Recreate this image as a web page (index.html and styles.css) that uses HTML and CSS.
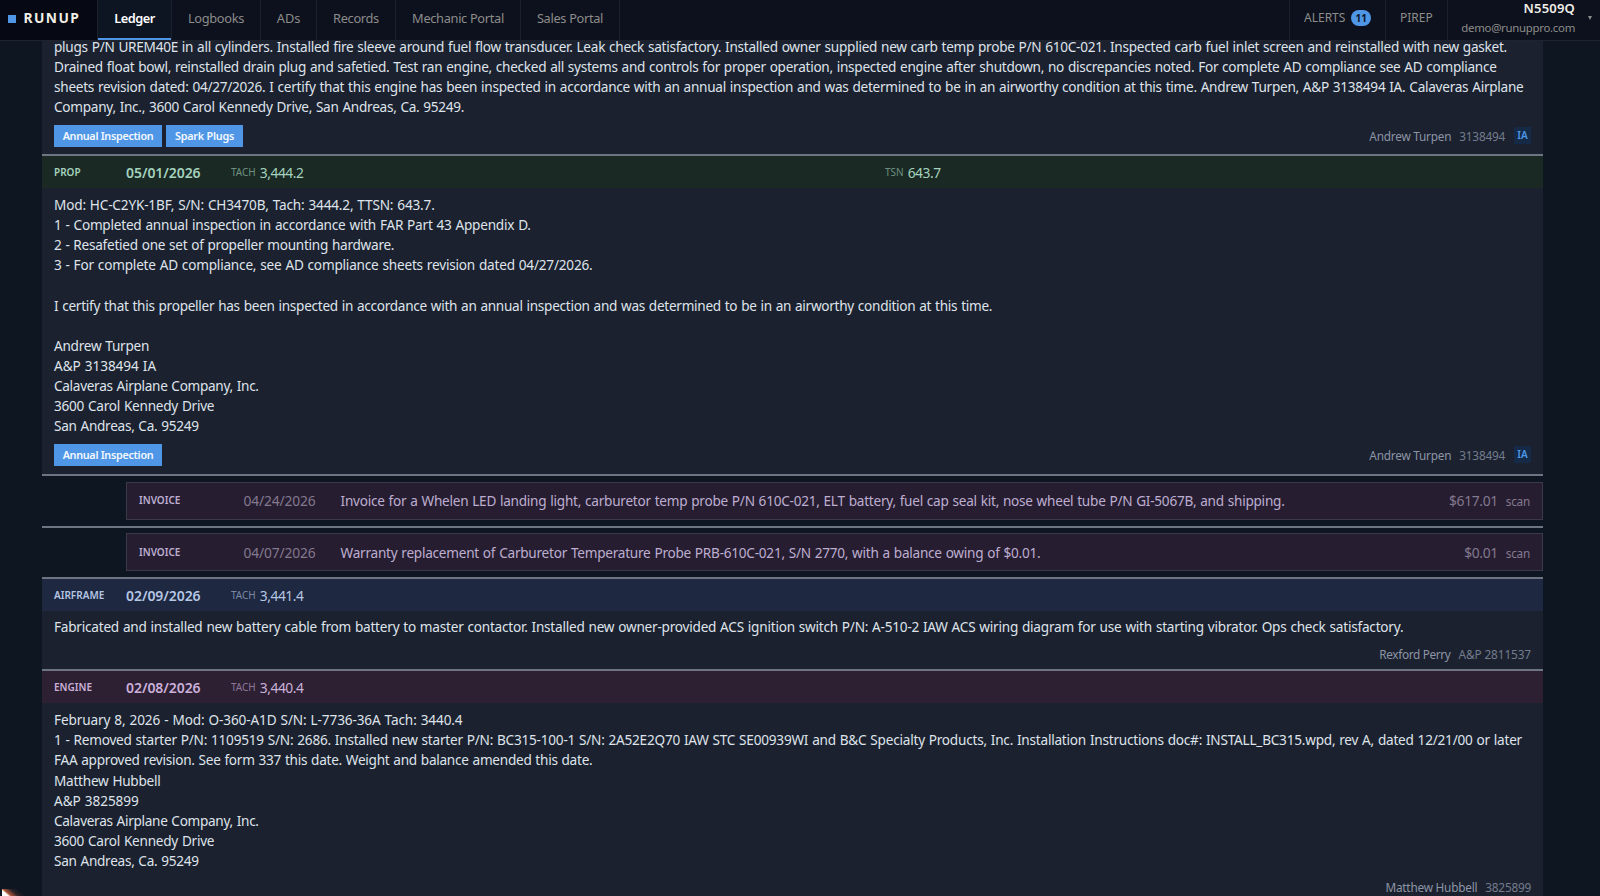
FILE: index.html
```html
<!DOCTYPE html>
<html lang="en">
<head>
<meta charset="utf-8">
<title>RunUp – Ledger</title>
<link rel="stylesheet" href="styles.css">
</head>
<body>
<nav class="nav">
  <div class="brand"><i class="mark"></i><span class="name">RUNUP</span></div>
  <a class="tab active"><span>Ledger</span></a>
  <a class="tab logbooks"><span>Logbooks</span></a>
  <a class="tab ads"><span>ADs</span></a>
  <a class="tab records"><span>Records</span></a>
  <a class="tab mechanic"><span>Mechanic Portal</span></a>
  <a class="tab sales"><span>Sales Portal</span></a>
  <div class="tools">
    <a class="tool alerts"><span>ALERTS</span><b class="count">11</b></a>
    <a class="tool pirep"><span>PIREP</span></a>
    <div class="account">
      <div class="who"><span class="tail">N5509Q</span><span class="mail">demo@runuppro.com</span></div>
      <span class="caret"></span>
    </div>
  </div>
</nav>
<main class="ledger">
  <article class="entry first">
    <div class="text"><p>plugs P/N UREM40E in all cylinders. Installed fire sleeve around fuel flow transducer. Leak check satisfactory. Installed owner supplied new carb temp probe P/N 610C-021. Inspected carb fuel inlet screen and reinstalled with new gasket.</p><p class="ls-27">Drained float bowl, reinstalled drain plug and safetied. Test ran engine, checked all systems and controls for proper operation, inspected engine after shutdown, no discrepancies noted. For complete AD compliance see AD compliance</p><p>sheets revision dated: 04/27/2026. I certify that this engine has been inspected in accordance with an annual inspection and was determined to be in an airworthy condition at this time. Andrew Turpen, A&amp;P 3138494 IA. Calaveras Airplane</p><p class="ls-27">Company, Inc., 3600 Carol Kennedy Drive, San Andreas, Ca. 95249.</p></div>
    <footer class="foot"><b class="tag annual">Annual Inspection</b><b class="tag plugs">Spark Plugs</b><div class="sign"><span>Andrew Turpen</span><span class="cert">3138494</span><b class="ia">IA</b></div></footer>
  </article>
  <article class="entry prop">
    <header class="head"><b class="kind">PROP</b><b class="date">05/01/2026</b><span class="meter"><small>TACH</small><span>3,444.2</span></span><span class="meter tsn"><small>TSN</small><span>643.7</span></span></header>
    <div class="text"><p class="ls-17">Mod: HC-C2YK-1BF, S/N: CH3470B, Tach: 3444.2, TTSN: 643.7.</p><p class="ls-22">1 - Completed annual inspection in accordance with FAR Part 43 Appendix D.</p><p>2 - Resafetied one set of propeller mounting hardware.</p><p class="ls-20">3 - For complete AD compliance, see AD compliance sheets revision dated 04/27/2026.</p><p></p><p class="ls-28">I certify that this propeller has been inspected in accordance with an annual inspection and was determined to be in an airworthy condition at this time.</p><p></p><p class="ls-25">Andrew Turpen</p><p class="ls-06">A&amp;P 3138494 IA</p><p class="ls-30">Calaveras Airplane Company, Inc.</p><p class="ls-25">3600 Carol Kennedy Drive</p><p class="ls-28">San Andreas, Ca. 95249</p></div>
    <footer class="foot"><b class="tag annual">Annual Inspection</b><div class="sign"><span>Andrew Turpen</span><span class="cert">3138494</span><b class="ia">IA</b></div></footer>
  </article>
  <article class="bill"><div class="box"><b class="kind">INVOICE</b><span class="when">04/24/2026</span><span class="what">Invoice for a Whelen LED landing light, carburetor temp probe P/N 610C-021, ELT battery, fuel cap seal kit, nose wheel tube P/N GI-5067B, and shipping.</span><span class="sum">$617.01</span><span class="scan">scan</span></div></article>
  <article class="bill"><div class="box"><b class="kind">INVOICE</b><span class="when">04/07/2026</span><span class="what">Warranty replacement of Carburetor Temperature Probe PRB-610C-021, S/N 2770, with a balance owing of $0.01.</span><span class="sum">$0.01</span><span class="scan">scan</span></div></article>
  <article class="entry airframe">
    <header class="head"><b class="kind">AIRFRAME</b><b class="date">02/09/2026</b><span class="meter"><small>TACH</small><span>3,441.4</span></span></header>
    <div class="text"><p class="ls-22">Fabricated and installed new battery cable from battery to master contactor. Installed new owner-provided ACS ignition switch P/N: A-510-2 IAW ACS wiring diagram for use with starting vibrator. Ops check satisfactory.</p></div>
    <footer class="foot plain"><div class="sign"><span class="perry">Rexford Perry</span><span class="cert mixed">A&amp;P 2811537</span></div></footer>
  </article>
  <article class="entry engine">
    <header class="head"><b class="kind">ENGINE</b><b class="date">02/08/2026</b><span class="meter"><small>TACH</small><span>3,440.4</span></span></header>
    <div class="text"><p class="ls-12">February 8, 2026 - Mod: O-360-A1D S/N: L-7736-36A Tach: 3440.4</p><p class="ls-22">1 - Removed starter P/N: 1109519 S/N: 2686. Installed new starter P/N: BC315-100-1 S/N: 2A52E2Q70 IAW STC SE00939WI and B&amp;C Specialty Products, Inc. Installation Instructions doc#: INSTALL_BC315.wpd, rev A, dated 12/21/00 or later</p><p>FAA approved revision. See form 337 this date. Weight and balance amended this date.</p><p class="ls-25">Matthew Hubbell</p><p class="ls-06">A&amp;P 3825899</p><p class="ls-30">Calaveras Airplane Company, Inc.</p><p class="ls-25">3600 Carol Kennedy Drive</p><p class="ls-28">San Andreas, Ca. 95249</p></div>
    <footer class="foot plain"><div class="sign"><span>Matthew Hubbell</span><span class="cert">3825899</span></div></footer>
  </article>
</main>
<div class="pointer"></div>
</body>
</html>
```
FILE: styles.css
```css
* { box-sizing: border-box; }

html, body { height: 100%; }

body {
  margin: 0;
  overflow: hidden;
  background: #0e1621;
  color: #dfe3ea;
  font-family: "Noto Sans", "Open Sans", sans-serif;
  font-size: 13.8px;
  white-space: nowrap;
}

p { margin: 0; }

.nav {
  position: relative;
  z-index: 2;
  display: flex;
  height: 41px;
  background: #0d111e;
  border-bottom: 1px solid #1e232d;
  color: #8c8c89;
}

.brand {
  display: flex;
  align-items: center;
  gap: 8px;
  width: 97px;
  padding: 0 0 6px 7.5px;
  background: #060913;
}

.mark { width: 8px; height: 8px; margin-top: 3px; background: #4f97e6; }
.name { color: #f0eee6; font-size: 13.8px; font-weight: 700; letter-spacing: 1.4px; }

.tab {
  display: flex;
  justify-content: center;
  align-items: center;
  padding-bottom: 5px;
  border-left: 1px solid #1b202b;
  font-size: 12.8px;
  letter-spacing: -.32px;
}
.tab.active { width: 74px; background: #0d1422; color: #fff; font-weight: 600; letter-spacing: -.5px; box-shadow: inset 0 -2px #4f97e6; }
.logbooks { width: 89px; }
.ads { width: 56px; letter-spacing: -.1px; }
.records { width: 79px; }
.mechanic { width: 125px; }
.sales { width: 100px; border-right: 1px solid #1b202b; }

.tools { display: flex; margin-left: auto; }
.tool {
  display: flex;
  align-items: center;
  gap: 6px;
  padding: 0 14px 5px;
  border-left: 1px solid #1b202b;
  font-size: 12px;
}
.alerts { width: 96px; }
.pirep { width: 62px; }
.count {
  width: 20px;
  height: 16px;
  border-radius: 8px;
  background: #4f97e6;
  color: #0b1428;
  font-size: 10px;
  line-height: 16px;
  text-align: center;
}
.account {
  display: flex;
  align-items: center;
  justify-content: flex-end;
  width: 153px;
  padding-right: 8px;
  border-left: 1px solid #1b202b;
}
.who { display: flex; flex-direction: column; align-items: flex-end; line-height: 19px; padding-bottom: 5px; }
.tail { color: #f0eee6; font-size: 13px; font-weight: 600; letter-spacing: .2px; }
.mail { font-size: 11.4px; letter-spacing: -.28px; }
.caret {
  margin: 0 0 5px 13px;
  border: 2px solid transparent;
  border-top: 4px solid #8c8c89;
  border-bottom: 0;
}

.ledger { width: 1501px; margin-left: 42px; }

.entry { display: flow-root; background: #1b212f; border-top: 2px solid #6d7482; }
.entry.first { height: 117.5px; margin-top: -4.5px; border: 0; }
.prop { height: 320px; }
.airframe { height: 92px; }
.engine { height: 240px; }

.text { padding: 6px 12px 0; font-size: 13.6px; letter-spacing: -.262px; word-spacing: .6px; }
.text p { height: 20.14px; line-height: 20.14px; }
.first .text { padding-top: 0; }
.prop .text, .engine .text { padding-top: 7px; }

/* tracking steps, in hundredths of a pixel */
.ls-06 { letter-spacing: -.06px; }
.ls-12 { letter-spacing: -.12px; }
.ls-17 { letter-spacing: -.17px; }
.ls-20 { letter-spacing: -.203px; }
.ls-22 { letter-spacing: -.225px; }
.ls-25 { letter-spacing: -.25px; }
.ls-27 { letter-spacing: -.272px; }
.ls-28 { letter-spacing: -.28px; }
.ls-30 { letter-spacing: -.3px; }

.head {
  display: flex;
  align-items: center;
  height: 32px;
  padding-left: 12px;
}
.kind { width: 72px; font-size: 10px; font-weight: 600; }
.date { width: 105px; font-size: 14px; font-weight: 600; letter-spacing: -.07px; }
.meter { display: flex; align-items: center; gap: 4px; width: 654px; letter-spacing: -.46px; }
.meter small { font-size: 10px; letter-spacing: 0; opacity: .6; }
.prop .head { background: #1a2924; color: #a4d2bd; }
.airframe .head { background: #1e2840; color: #b5c6e4; }
.engine .head { background: #2d2033; color: #cbb0da; }

.foot { display: flex; align-items: center; gap: 4px; height: 22.6px; margin: 7.6px 12px 0; }
.prop .foot { margin-top: 7px; }
.foot.plain { margin-top: 6px; height: 22px; }
.engine .foot.plain { margin-top: 5px; }
.tag {
  height: 22.6px;
  background: #4f97e6;
  color: #f4f8ff;
  font-size: 10.8px;
  font-weight: 600;
  line-height: 21.6px;
  letter-spacing: -.3px;
  text-align: center;
}
.annual { width: 108px; }
.plugs { width: 77px; letter-spacing: -.22px; }
.sign { display: flex; align-items: center; gap: 8px; margin-left: auto; color: #8d95a5; font-size: 11.8px; letter-spacing: -.22px; }
.perry { letter-spacing: -.34px; }
.cert { color: #737c8c; }
.mixed { letter-spacing: -.1px; }
.ia {
  width: 17px;
  height: 17px;
  margin-left: 1px;
  background: #142a47;
  color: #4f97e6;
  font-size: 10px;
  font-weight: 600;
  line-height: 17px;
  letter-spacing: 0;
  text-align: center;
}

.bill { height: 51.6px; padding: 5.6px 0 0 84px; border-top: 2px solid #6d7482; }
.box {
  display: flex;
  align-items: center;
  height: 38px;
  padding: 0 12px;
  background: #271d31;
  border: 1px solid #3b3848;
  color: #bdaed0;
}
.bill .kind { width: 104.6px; padding-bottom: 1px; }
.when { width: 97px; color: #83798f; letter-spacing: -.15px; }
.what { font-size: 13.6px; letter-spacing: -.247px; word-spacing: .6px; }
.sum { margin-left: auto; color: #83798f; letter-spacing: -.33px; }
.scan { margin: 1px 0 0 8px; color: #83798f; font-size: 11.8px; letter-spacing: -.25px; }

/* pointer tip entering from the bottom edge */
.pointer {
  position: absolute;
  left: 2px;
  bottom: 0;
  width: 22px;
  height: 7px;
  background: linear-gradient(40deg, #fff 0 22%, #b0593c 30%, rgba(90, 50, 50, .4) 55%, transparent 80%);
}
```
